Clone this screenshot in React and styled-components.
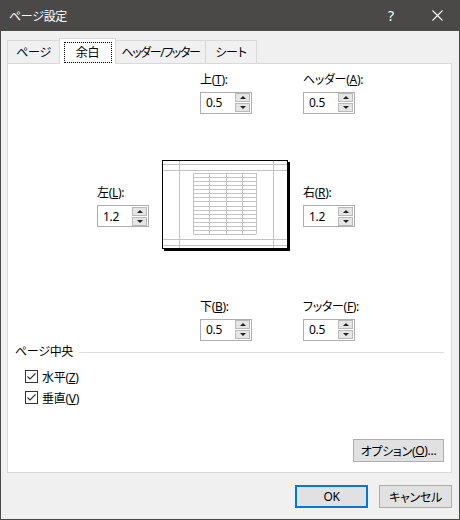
import styled, { createGlobalStyle } from 'styled-components'

const GlobalStyle = createGlobalStyle`
	body {
		margin: 0;
		font-family: "Segoe UI", "Noto Sans", "Noto Sans CJK JP", sans-serif;
		font-size: 12px;
		font-feature-settings: "palt";
		color: #000;
	}
`

const tabs = [
	{ name: 'ページ', width: 53 },
	{ name: '余白', width: 57 },
	{ name: 'ヘッダー/フッター', width: 91 },
	{ name: 'シート', width: 52 }
]

const Spinner = ({ value }) => (
	<SpinBox>
		<SpinValue>{value}</SpinValue>
		<SpinButtons>
			<SpinButton>
				<Arrow up />
			</SpinButton>
			<SpinButton>
				<Arrow />
			</SpinButton>
		</SpinButtons>
	</SpinBox>
)

const Field = ({ label, keyChar, value, area, center }) => (
	<FieldBox area={area} center={center}>
		<FieldLabel>
			{label}(<u>{keyChar}</u>):
		</FieldLabel>
		<Spinner value={value} />
	</FieldBox>
)

const Preview = () => {
	const rows = []
	for (let i = 0; i <= 15; i++) rows.push(13 + i * 4.07)
	const cols = [31, 47, 63.5, 80, 94]
	return (
		<PreviewBox>
			<svg width="128" height="92" viewBox="0 0 128 92">
				<rect x="0" y="0" width="128" height="92" fill="#fff" />
				<g stroke="#c3c3c3" strokeWidth="1" shapeRendering="crispEdges">
					<line x1="1" y1="4.5" x2="125" y2="4.5" />
					<line x1="1" y1="10.5" x2="125" y2="10.5" />
					<line x1="1" y1="79.5" x2="125" y2="79.5" />
					<line x1="1" y1="85.5" x2="125" y2="85.5" />
					<line x1="17.5" y1="1" x2="17.5" y2="88" />
					<line x1="111.5" y1="1" x2="111.5" y2="88" />
					{rows.map((y) => (
						<line key={y} x1="31" y1={Math.round(y) + 0.5} x2="94" y2={Math.round(y) + 0.5} />
					))}
					{cols.map((x) => (
						<line key={x} x1={Math.round(x) + 0.5} y1="13" x2={Math.round(x) + 0.5} y2="74" />
					))}
				</g>
				<rect x="0.5" y="0.5" width="125" height="88" fill="none" stroke="#000" shapeRendering="crispEdges" />
				<rect x="126" y="2" width="2" height="89" fill="#000" />
				<rect x="2" y="89" width="126" height="2" fill="#000" />
			</svg>
		</PreviewBox>
	)
}

const CheckItem = ({ label, keyChar }) => (
	<CheckRow>
		<CheckBox>
			<svg width="11" height="11" viewBox="0 0 11 11">
				<polyline points="1.5,5.5 4,8 9.5,2.5" fill="none" stroke="#333" strokeWidth="1.2" />
			</svg>
		</CheckBox>
		<span>
			{label}(<u>{keyChar}</u>)
		</span>
	</CheckRow>
)

const App = () => {
	return (
		<Window>
			<GlobalStyle />
			<TitleBar>
				<Title>ページ設定</Title>
				<TitleButton>?</TitleButton>
				<TitleButton>
					<svg width="11" height="11" viewBox="0 0 11 11">
						<path d="M0.5 0.5 L10.5 10.5 M10.5 0.5 L0.5 10.5" stroke="#fff" strokeWidth="1.1" />
					</svg>
				</TitleButton>
			</TitleBar>
			<Body>
				<TabList>
					{tabs.map((t) => (
						<Tab key={t.name} width={t.width} active={t.name === '余白'}>
							{t.name === '余白' ? <Focus>{t.name}</Focus> : t.name}
						</Tab>
					))}
				</TabList>
				<Panel>
					<MarginGrid>
						<Field area="top" center label="上" keyChar="T" value="0.5" />
						<Field area="header" label="ヘッダー" keyChar="A" value="0.5" />
						<Field area="left" label="左" keyChar="L" value="1.2" />
						<Preview />
						<Field area="right" label="右" keyChar="R" value="1.2" />
						<Field area="bottom" center label="下" keyChar="B" value="0.5" />
						<Field area="footer" label="フッター" keyChar="F" value="0.5" />
					</MarginGrid>
					<SectionHeader>
						<span>ページ中央</span>
						<SectionLine />
					</SectionHeader>
					<CheckList>
						<CheckItem label="水平" keyChar="Z" />
						<CheckItem label="垂直" keyChar="V" />
					</CheckList>
					<OptionRow>
						<Button width={91}>
							オプション(<u>O</u>)...
						</Button>
					</OptionRow>
				</Panel>
				<Footer>
					<Button width={73} primary>
						OK
					</Button>
					<Button width={73}>キャンセル</Button>
				</Footer>
			</Body>
		</Window>
	)
}

export default App

const Window = styled.div`
	width: 460px;
	height: 520px;
	box-sizing: border-box;
	display: flex;
	flex-direction: column;
	background: #f0f0f0;
	border: 1px solid #4b4947;
	border-top: none;
	letter-spacing: -0.3px;
`

const TitleBar = styled.div`
	height: 31px;
	margin: 0 -1px;
	display: flex;
	align-items: center;
	background: #4b4947;
	color: #fff;
	flex-shrink: 0;
`

const Title = styled.div`
	flex: 1;
	padding-left: 9px;
	font-size: 12px;
`

const TitleButton = styled.div`
	width: 46px;
	height: 31px;
	display: flex;
	align-items: center;
	justify-content: center;
	font-size: 14px;
	font-family: "Noto Sans", sans-serif;
`

const Body = styled.div`
	flex: 1;
	display: flex;
	flex-direction: column;
	padding: 8px 7px 0 6px;
`

const TabList = styled.div`
	display: flex;
	align-items: flex-end;
	height: 25px;
	padding-left: 1px;
	position: relative;
	z-index: 1;
	margin-bottom: -1px;
`

const Tab = styled.div`
	box-sizing: border-box;
	width: ${(p) => p.width}px;
	height: ${(p) => (p.active ? '26px' : '24px')};
	display: flex;
	align-items: center;
	justify-content: center;
	border: 1px solid #d9d9d9;
	border-bottom: ${(p) => (p.active ? 'none' : '1px solid #d9d9d9')};
	margin-left: -1px;
	background: ${(p) => (p.active ? '#fff' : '#f0f0f0')};
	white-space: nowrap;
	letter-spacing: ${(p) => (p.width > 80 ? '-1.4px' : '-0.3px')};
`

const Focus = styled.span`
	display: inline-flex;
	align-items: center;
	justify-content: center;
	width: 46px;
	height: 19px;
	margin-top: 1px;
	outline: 1px dotted #000;
`

const Panel = styled.div`
	height: 410px;
	box-sizing: border-box;
	display: flex;
	flex-direction: column;
	background: #fff;
	border: 1px solid #d9d9d9;
	padding: 7px 7px 10px 7px;
`

const MarginGrid = styled.div`
	display: grid;
	margin-left: 82px;
	grid-template-columns: 52px 128px 52px;
	grid-template-rows: 43px 90px 43px;
	column-gap: 13px;
	row-gap: 47px;
	grid-template-areas:
		'. top header'
		'left preview right'
		'. bottom footer';
	align-items: center;
`

const FieldBox = styled.div`
	grid-area: ${(p) => p.area};
	justify-self: ${(p) => (p.center ? 'center' : 'start')};
	display: flex;
	flex-direction: column;
	gap: 4px;
	white-space: nowrap;
`

const FieldLabel = styled.div`
	line-height: 16px;
`

const SpinBox = styled.div`
	box-sizing: border-box;
	width: 52px;
	height: 22px;
	display: flex;
	align-items: stretch;
	border: 1px solid #adadad;
	background: #fff;
	padding: 0 1px 0 0;
`

const SpinValue = styled.div`
	flex: 1;
	display: flex;
	align-items: center;
	padding-left: 5px;
	font-size: 12px;
	font-family: "Noto Sans", sans-serif;
`

const SpinButtons = styled.div`
	width: 15px;
	display: flex;
	flex-direction: column;
	justify-content: center;
	gap: 1px;
`

const SpinButton = styled.div`
	box-sizing: border-box;
	height: 9px;
	display: flex;
	align-items: center;
	justify-content: center;
	background: #e5e5e5;
	border: 1px solid #b9b9b9;
`

const Arrow = styled.div`
	width: 0;
	height: 0;
	border-left: 3px solid transparent;
	border-right: 3px solid transparent;
	${(p) => (p.up ? 'border-bottom: 3px solid #222;' : 'border-top: 3px solid #222;')}
`

const PreviewBox = styled.div`
	grid-area: preview;
	display: flex;
`

const SectionHeader = styled.div`
	display: flex;
	align-items: center;
	gap: 6px;
	margin-top: 3px;
	line-height: 16px;
`

const SectionLine = styled.div`
	flex: 1;
	border-top: 1px solid #dcdcdc;
`

const CheckList = styled.div`
	display: flex;
	flex-direction: column;
	padding-left: 10px;
	margin-top: 6px;
`

const CheckRow = styled.div`
	display: flex;
	align-items: center;
	gap: 4px;
	height: 21px;
`

const CheckBox = styled.div`
	box-sizing: border-box;
	width: 13px;
	height: 13px;
	border: 1px solid #333;
	background: #fff;
	display: flex;
	align-items: center;
	justify-content: center;
`

const OptionRow = styled.div`
	margin-top: auto;
	display: flex;
	justify-content: flex-end;
`

const Button = styled.div`
	box-sizing: border-box;
	width: ${(p) => p.width}px;
	height: 23px;
	display: flex;
	align-items: center;
	justify-content: center;
	background: #e1e1e1;
	border: ${(p) => (p.primary ? '2px solid #0078d7' : '1px solid #adadad')};
	white-space: nowrap;
`

const Footer = styled.div`
	display: flex;
	justify-content: flex-end;
	gap: 11px;
	margin-top: 12px;
`
